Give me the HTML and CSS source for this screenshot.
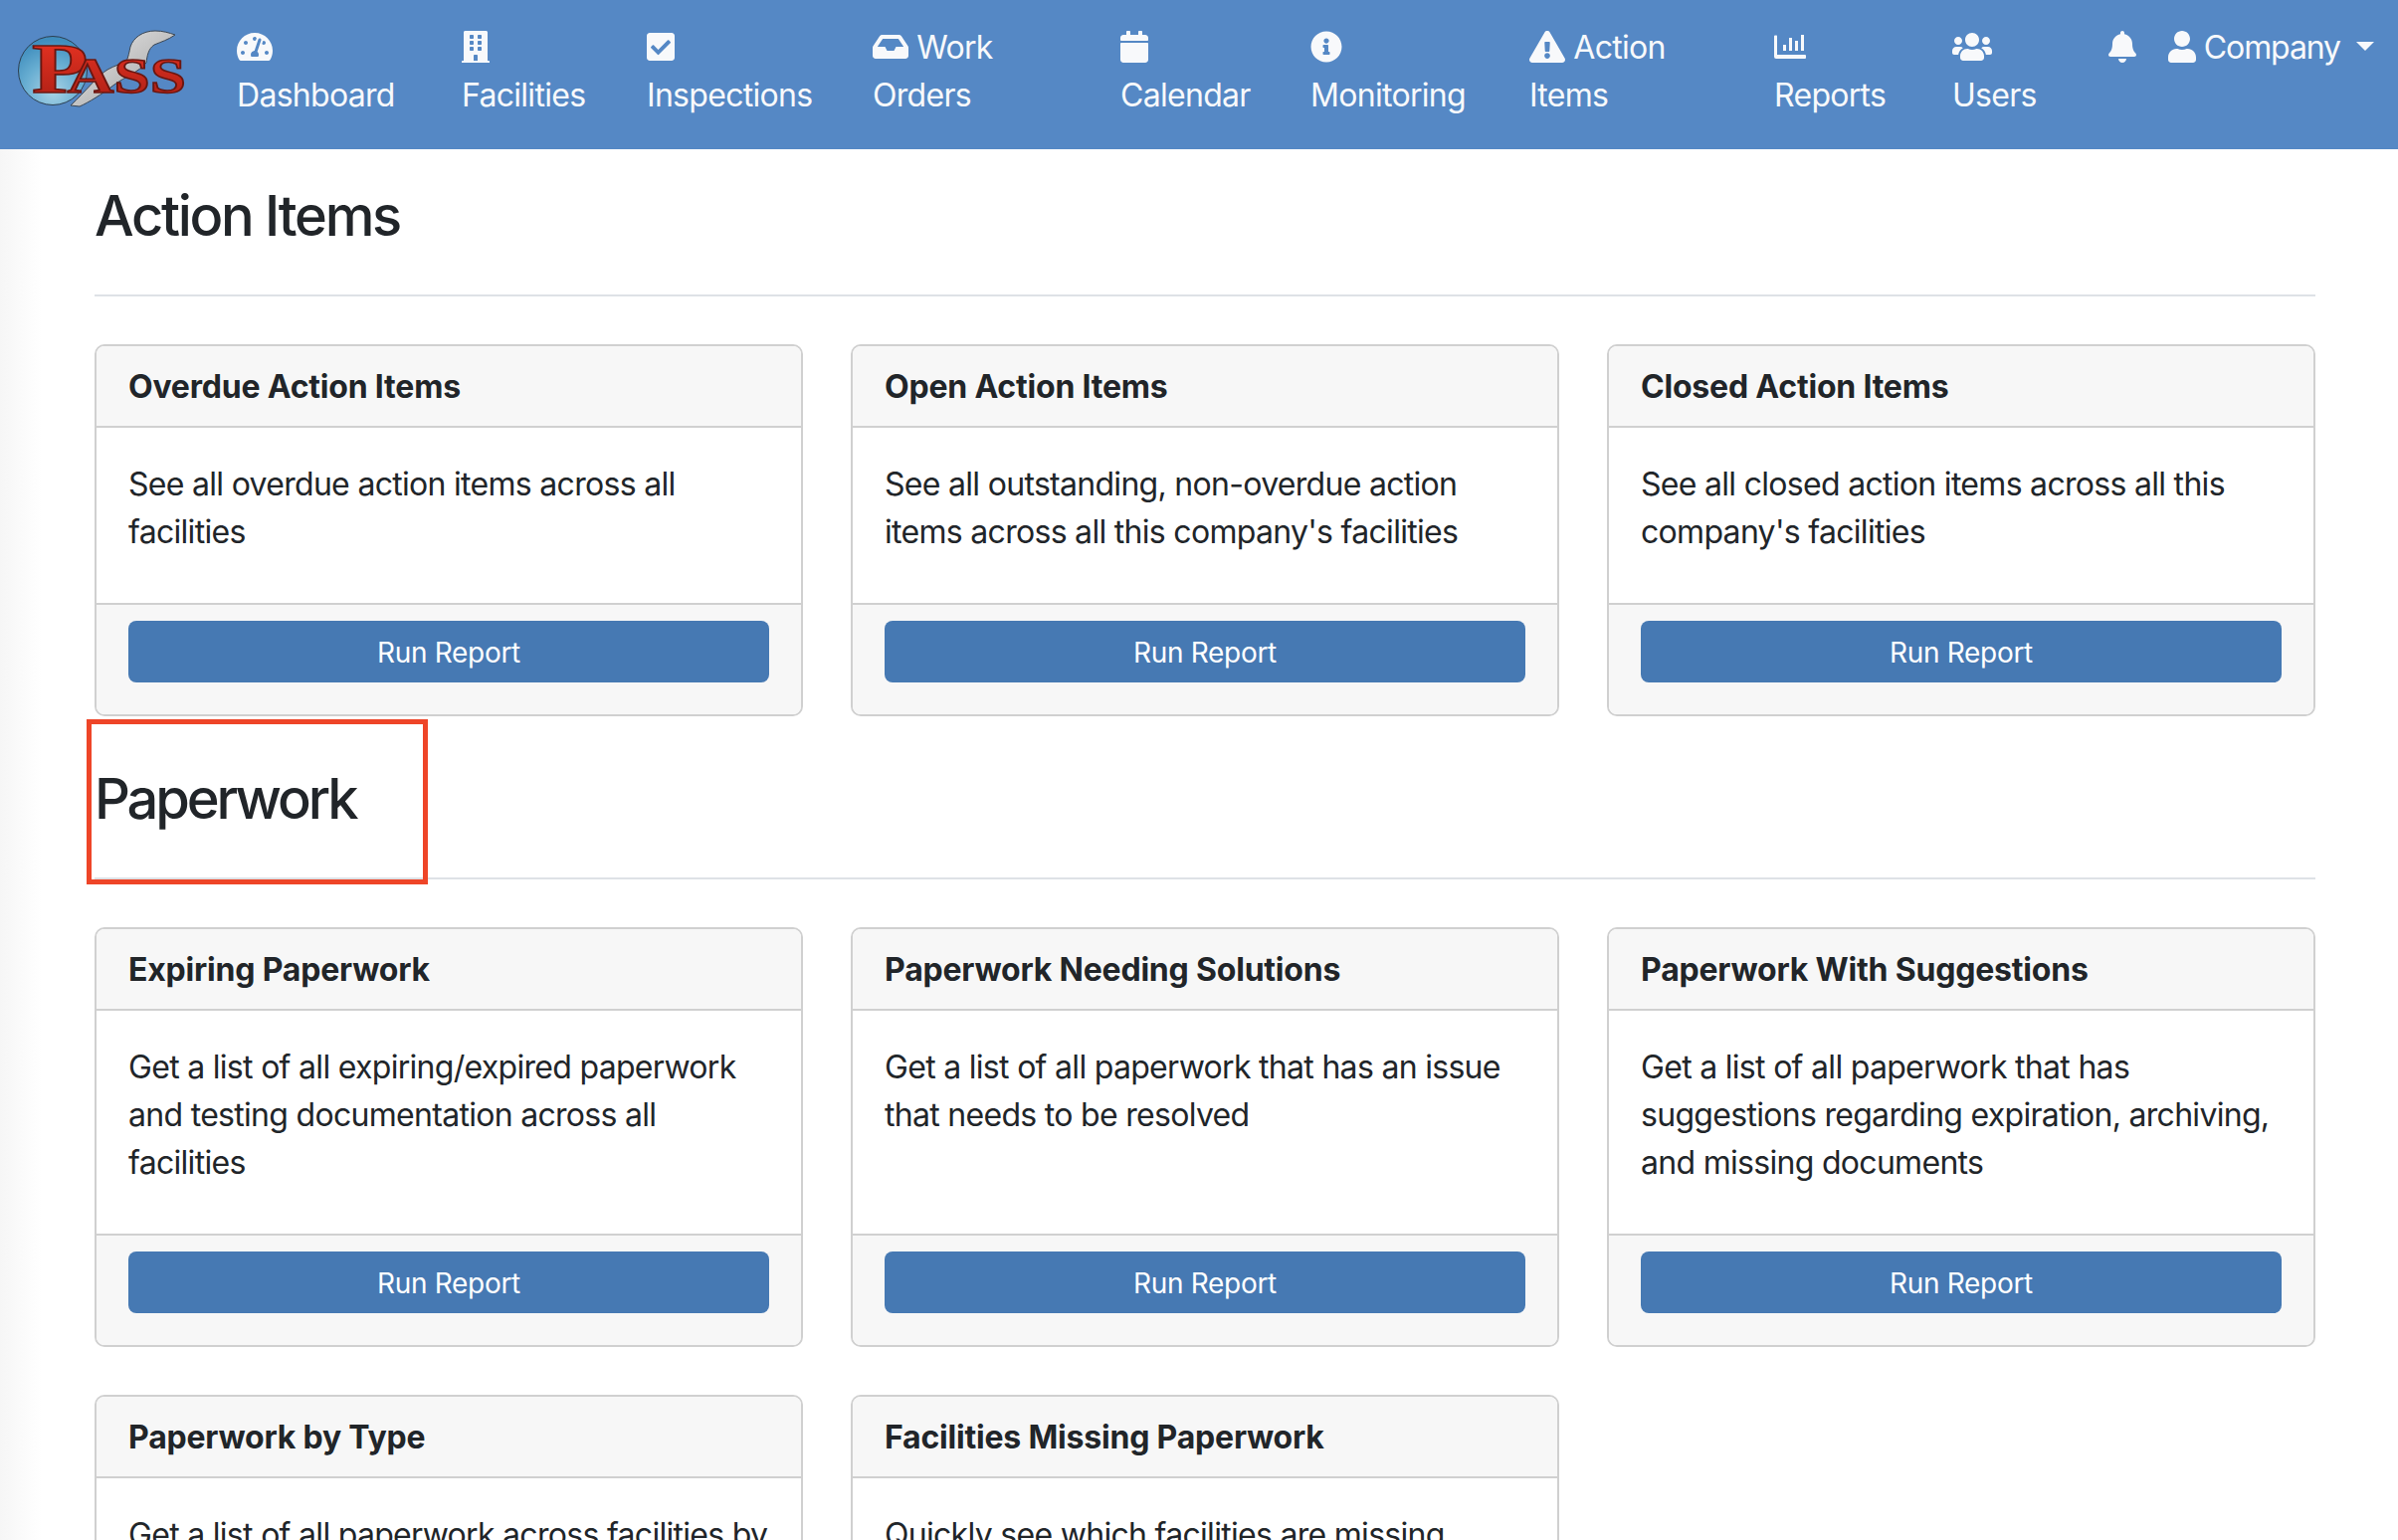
FILE: index.html
```html
<!DOCTYPE html>
<html lang="en">
<head>
<meta charset="utf-8">
<title>Action Items</title>
<link rel="stylesheet" href="styles.css">
</head>
<body>
<nav class="navbar">
  <a class="brand" href="#">
    <svg class="logo" viewBox="0 0 170 80" aria-label="PASS logo">
      <defs>
        <radialGradient id="orb" cx="50%" cy="80%" r="75%">
          <stop offset="0" stop-color="#a9d3e6"/>
          <stop offset="0.55" stop-color="#68aed2"/>
          <stop offset="1" stop-color="#3f8dbd"/>
        </radialGradient>
        <linearGradient id="steel" x1="0" y1="0" x2="1" y2="1">
          <stop offset="0" stop-color="#ebebeb"/>
          <stop offset="0.6" stop-color="#bcbcbc"/>
          <stop offset="1" stop-color="#8d8d8d"/>
        </linearGradient>
        <linearGradient id="red" x1="0" y1="0" x2="0" y2="1">
          <stop offset="0" stop-color="#ee3524"/>
          <stop offset="1" stop-color="#a81e14"/>
        </linearGradient>
      </defs>
      <circle cx="33" cy="41" r="34.5" fill="url(#orb)" stroke="#2c3f50" stroke-width="1"/>
      <path d="M136 1c-13 0-22 7-25 16-1 5-2 10-4 15-5 2-12 4-19 8-10 6-22 22-37 36l9 1c9-4 22-12 35-22 11-8 25-13 32-22 1-7 2-14 8-18 7-3 14-5 21-10-6-2-12-4-20-4z" fill="url(#steel)" stroke="#3a4654" stroke-width="1"/>
      <text class="logo-word" transform="translate(12 63) scale(1.3 1)"><tspan class="logo-p">P</tspan><tspan class="logo-ass" dx="-16">ASS</tspan></text>
    </svg>
  </a>
  <a class="nav-link item-dashboard" href="#"><svg class="icon" viewBox="0 0 576 512"><path d="M288 32C128.94 32 0 160.94 0 320c0 52.8 14.25 102.26 39.06 144.8 5.61 9.62 16.3 15.2 27.44 15.2h443c11.14 0 21.83-5.58 27.44-15.2C561.75 422.26 576 372.8 576 320c0-159.06-128.94-288-288-288zm0 64c14.71 0 26.58 10.13 30.32 23.65-1.11 2.26-2.64 4.23-3.45 6.67l-9.22 27.67c-5.13 3.49-10.97 6.01-17.64 6.01-17.67 0-32-14.33-32-32S270.33 96 288 96zM96 384c-17.67 0-32-14.33-32-32s14.33-32 32-32 32 14.33 32 32-14.33 32-32 32zm48-160c-17.67 0-32-14.33-32-32s14.33-32 32-32 32 14.33 32 32-14.33 32-32 32zm246.77-72.41l-61.33 184C343.13 347.33 352 364.54 352 384c0 11.72-3.38 22.55-8.88 32H232.88c-5.5-9.45-8.88-20.28-8.88-32 0-33.94 26.5-61.43 59.9-63.59l61.34-184.01c4.17-12.56 17.73-19.45 30.36-15.17 12.57 4.19 19.35 17.79 15.17 30.36zm14.66 57.2l15.52-46.55c3.47-1.29 7.13-2.23 11.05-2.23 17.67 0 32 14.33 32 32s-14.33 32-32 32c-11.38-.01-20.89-6.28-26.57-15.22zM480 384c-17.67 0-32-14.33-32-32s14.33-32 32-32 32 14.33 32 32-14.33 32-32 32z"/></svg> Dashboard</a>
  <a class="nav-link item-facilities" href="#"><svg class="icon" viewBox="0 0 448 512"><path d="M436 480h-20V24c0-13.255-10.745-24-24-24H56C42.745 0 32 10.745 32 24v456H12c-6.627 0-12 5.373-12 12v20h448v-20c0-6.627-5.373-12-12-12zM128 76c0-6.627 5.373-12 12-12h40c6.627 0 12 5.373 12 12v40c0 6.627-5.373 12-12 12h-40c-6.627 0-12-5.373-12-12V76zm0 96c0-6.627 5.373-12 12-12h40c6.627 0 12 5.373 12 12v40c0 6.627-5.373 12-12 12h-40c-6.627 0-12-5.373-12-12v-40zm52 148h-40c-6.627 0-12-5.373-12-12v-40c0-6.627 5.373-12 12-12h40c6.627 0 12 5.373 12 12v40c0 6.627-5.373 12-12 12zm76 160h-64v-84c0-6.627 5.373-12 12-12h40c6.627 0 12 5.373 12 12v84zm64-172c0 6.627-5.373 12-12 12h-40c-6.627 0-12-5.373-12-12v-40c0-6.627 5.373-12 12-12h40c6.627 0 12 5.373 12 12v40zm0-96c0 6.627-5.373 12-12 12h-40c-6.627 0-12-5.373-12-12v-40c0-6.627 5.373-12 12-12h40c6.627 0 12 5.373 12 12v40zm0-96c0 6.627-5.373 12-12 12h-40c-6.627 0-12-5.373-12-12V76c0-6.627 5.373-12 12-12h40c6.627 0 12 5.373 12 12v40z"/></svg> Facilities</a>
  <a class="nav-link item-inspections" href="#"><svg class="icon" viewBox="0 0 448 512"><path d="M400 480H48c-26.51 0-48-21.49-48-48V80c0-26.51 21.49-48 48-48h352c26.51 0 48 21.49 48 48v352c0 26.51-21.49 48-48 48zm-204.686-98.059l184-184c6.248-6.248 6.248-16.379 0-22.627l-22.627-22.627c-6.248-6.248-16.379-6.249-22.628 0L184 302.745l-70.059-70.059c-6.248-6.248-16.379-6.248-22.628 0l-22.627 22.627c-6.248 6.248-6.248 16.379 0 22.627l104 104c6.249 6.25 16.379 6.25 22.628.001z"/></svg> Inspections</a>
  <a class="nav-link item-work" href="#"><svg class="icon" viewBox="0 0 576 512"><path d="M567.938 243.908L462.25 85.374A48.003 48.003 0 0 0 422.311 64H153.689a48 48 0 0 0-39.938 21.374L8.062 243.908A47.994 47.994 0 0 0 0 270.533V400c0 26.51 21.49 48 48 48h480c26.51 0 48-21.49 48-48V270.533a47.994 47.994 0 0 0-8.062-26.625zM162.252 128h251.497l85.333 128H376l-32 64H232l-32-64H76.918l85.334-128z"/></svg> Work Orders</a>
  <a class="nav-link item-calendar" href="#"><svg class="icon" viewBox="0 0 448 512"><path d="M12 192h424c6.6 0 12 5.4 12 12v260c0 26.5-21.5 48-48 48H48c-26.5 0-48-21.5-48-48V204c0-6.6 5.4-12 12-12zm436-44v-36c0-26.5-21.5-48-48-48h-48V12c0-6.6-5.4-12-12-12h-40c-6.6 0-12 5.4-12 12v52H160V12c0-6.6-5.4-12-12-12h-40c-6.6 0-12 5.4-12 12v52H48C21.5 64 0 85.5 0 112v36c0 6.6 5.4 12 12 12h424c6.6 0 12-5.4 12-12z"/></svg> Calendar</a>
  <a class="nav-link item-monitoring" href="#"><svg class="icon" viewBox="0 0 512 512"><path d="M256 8C119.043 8 8 119.083 8 256c0 136.997 111.043 248 248 248s248-111.003 248-248C504 119.083 392.957 8 256 8zm0 110c23.196 0 42 18.804 42 42s-18.804 42-42 42-42-18.804-42-42 18.804-42 42-42zm56 254c0 6.627-5.373 12-12 12h-88c-6.627 0-12-5.373-12-12v-24c0-6.627 5.373-12 12-12h12v-64h-12c-6.627 0-12-5.373-12-12v-24c0-6.627 5.373-12 12-12h64c6.627 0 12 5.373 12 12v100h12c6.627 0 12 5.373 12 12v24z"/></svg> Monitoring</a>
  <a class="nav-link item-action" href="#"><svg class="icon" viewBox="0 0 576 512"><path d="M569.517 440.013C587.975 472.007 564.806 512 527.94 512H48.054c-36.937 0-59.999-40.055-41.577-71.987L246.423 23.985c18.467-32.009 64.72-31.951 83.154 0l239.94 416.028zM288 354c-25.405 0-46 20.595-46 46s20.595 46 46 46 46-20.595 46-46-20.595-46-46-46zm-43.673-165.346l7.418 136c.347 6.364 5.609 11.346 11.982 11.346h48.546c6.373 0 11.635-4.982 11.982-11.346l7.418-136c.375-6.874-5.098-12.654-11.982-12.654h-63.383c-6.884 0-12.356 5.78-11.981 12.654z"/></svg> Action Items</a>
  <a class="nav-link item-reports" href="#"><svg class="icon" viewBox="0 0 32 32"><path d="M0 5.5a1 1 0 0 1 1-1h1.4a.6.6 0 0 1 .6.6V24h28a1 1 0 0 1 1 1v2a1 1 0 0 1-1 1H2a2 2 0 0 1-2-2zM9 14h3v6H9zM15 7h3v13h-3zM21 10h3v10h-3zM27 4h3v16h-3z"/></svg> Reports</a>
  <a class="nav-link item-users" href="#"><svg class="icon" viewBox="0 0 640 512"><path d="M96 224c35.3 0 64-28.7 64-64s-28.7-64-64-64-64 28.7-64 64 28.7 64 64 64zm448 0c35.3 0 64-28.7 64-64s-28.7-64-64-64-64 28.7-64 64 28.7 64 64 64zm32 32h-64c-17.6 0-33.5 7.1-45.1 18.6 40.3 22.1 68.9 62 75.1 109.4h66c17.7 0 32-14.3 32-32v-32c0-35.3-28.7-64-64-64zm-256 0c61.9 0 112-50.1 112-112S381.9 32 320 32 208 82.1 208 144s50.1 112 112 112zm76.8 32h-8.3c-20.8 10-43.9 16-68.5 16s-47.6-6-68.5-16h-8.3C179.6 288 128 339.6 128 403.2V432c0 26.5 21.5 48 48 48h288c26.5 0 48-21.5 48-48v-28.8c0-63.6-51.6-115.2-115.2-115.2zm-223.7-13.4C161.5 263.1 145.6 256 128 256H64c-35.3 0-64 28.7-64 64v32c0 17.7 14.3 32 32 32h65.9c6.3-47.4 34.9-87.3 75.2-109.4z"/></svg> Users</a>
  <div class="nav-right">
    <a class="nav-link bell" href="#"><svg class="icon" viewBox="0 0 448 512"><path d="M224 512c35.32 0 63.97-28.65 63.97-64H160.03c0 35.35 28.65 64 63.97 64zm215.39-149.71c-19.32-20.76-55.47-51.99-55.47-154.29 0-77.7-54.48-139.9-127.94-155.16V32c0-17.67-14.32-32-31.98-32s-31.98 14.33-31.98 32v20.84C118.56 68.1 64.08 130.3 64.08 208c0 102.3-36.15 133.53-55.47 154.29-6 6.45-8.66 14.16-8.61 21.71.11 16.4 12.98 32 32.1 32h383.8c19.12 0 32-15.6 32.1-32 .05-7.55-2.61-15.27-8.61-21.71z"/></svg></a>
    <a class="nav-link company" href="#"><svg class="icon" viewBox="0 0 448 512"><path d="M224 256c70.7 0 128-57.3 128-128S294.7 0 224 0 96 57.3 96 128s57.3 128 128 128zm89.6 32h-16.7c-22.2 10.2-46.9 16-72.9 16s-50.6-5.8-72.9-16h-16.7C60.2 288 0 348.2 0 422.4V464c0 26.5 21.5 48 48 48h352c26.5 0 48-21.5 48-48v-41.6c0-74.2-60.2-134.4-134.4-134.4z"/></svg> Company</a>
  </div>
</nav>
<main class="content">
  <section class="section">
    <h1 class="page-title title-action">Action Items</h1>
    <div class="card-grid">
      <article class="card">
        <h2 class="card-header">Overdue Action Items</h2>
        <div class="card-body"><p>See all overdue action items across all facilities</p></div>
        <div class="card-footer"><a class="btn" href="#">Run Report</a></div>
      </article>
      <article class="card">
        <h2 class="card-header">Open Action Items</h2>
        <div class="card-body"><p>See all outstanding, non-overdue action items across all this company's facilities</p></div>
        <div class="card-footer"><a class="btn" href="#">Run Report</a></div>
      </article>
      <article class="card">
        <h2 class="card-header">Closed Action Items</h2>
        <div class="card-body"><p>See all closed action items across all this company's facilities</p></div>
        <div class="card-footer"><a class="btn" href="#">Run Report</a></div>
      </article>
    </div>
  </section>
  <section class="section">
    <h1 class="page-title title-paperwork">Paperwork<span class="highlight"></span></h1>
    <div class="card-grid">
      <article class="card">
        <h2 class="card-header">Expiring Paperwork</h2>
        <div class="card-body"><p>Get a list of all expiring/expired paperwork and testing documentation across all facilities</p></div>
        <div class="card-footer"><a class="btn" href="#">Run Report</a></div>
      </article>
      <article class="card">
        <h2 class="card-header">Paperwork Needing Solutions</h2>
        <div class="card-body"><p>Get a list of all paperwork that has an issue that needs to be resolved</p></div>
        <div class="card-footer"><a class="btn" href="#">Run Report</a></div>
      </article>
      <article class="card">
        <h2 class="card-header">Paperwork With Suggestions</h2>
        <div class="card-body"><p>Get a list of all paperwork that has suggestions regarding expiration, archiving, and missing documents</p></div>
        <div class="card-footer"><a class="btn" href="#">Run Report</a></div>
      </article>
      <article class="card">
        <h2 class="card-header">Paperwork by Type</h2>
        <div class="card-body"><p>Get a list of all paperwork across facilities by type</p></div>
        <div class="card-footer"><a class="btn" href="#">Run Report</a></div>
      </article>
      <article class="card">
        <h2 class="card-header">Facilities Missing Paperwork</h2>
        <div class="card-body"><p>Quickly see which facilities are missing paperwork</p></div>
        <div class="card-footer"><a class="btn" href="#">Run Report</a></div>
      </article>
    </div>
  </section>
</main>
</body>
</html>
```
FILE: styles.css
```css
* { box-sizing: border-box; }
html, body { margin: 0; height: 100%; overflow: hidden; }
body {
  font-family: Inter, "Liberation Sans", sans-serif;
  font-size: 32px;
  line-height: 48px;
  letter-spacing: -0.7px;
  color: #212529;
  background: #fff;
}
.navbar {
  display: flex;
  align-items: flex-start;
  height: 150px;
  padding: 24px 24px 0 20px;
  background: #5588c5;
}
.brand { width: 218px; flex: none; display: block; margin-top: 6px; }
.logo { display: block; width: 170px; height: 80px; overflow: visible; }
.logo-word {
  font-family: "Liberation Serif", serif;
  font-weight: 700;
  letter-spacing: 0;
  fill: url(#red);
  stroke: #6a1610;
  stroke-width: 1.5px;
}
.logo-p { font-size: 71px; }
.logo-ass { font-size: 50px; }
.nav-link {
  display: block;
  flex: none;
  padding-right: 48px;
  color: #f8f9fb;
  text-decoration: none;
}
.icon { height: 32px; width: auto; vertical-align: -4px; fill: currentColor; }
.item-dashboard { width: 226px; }
.item-facilities { width: 186px; }
.item-inspections { width: 227px; }
.item-work { width: 249px; }
.item-calendar { width: 191px; }
.item-monitoring { width: 220px; }
.item-action { width: 246px; }
.item-reports { width: 179px; }
.item-users { width: 156px; }
.nav-right { display: flex; margin-left: auto; }
.nav-right .nav-link { padding-right: 0; }
.bell { margin-right: 32px; }
.company { letter-spacing: -1.1px; }
.company::after {
  content: "";
  display: inline-block;
  margin-left: 16px;
  vertical-align: 8px;
  border-top: 9.6px solid #f8f9fb;
  border-left: 9.6px solid transparent;
  border-right: 9.6px solid transparent;
}
.content {
  padding: 34px 83px 0 95px;
  background: linear-gradient(to right, #f6f6f6, #fff 42px);
  min-height: calc(100% - 150px);
}
.section { margin-bottom: 50px; }
.page-title {
  position: relative;
  margin: 0 0 48px;
  padding-bottom: 45px;
  border-bottom: 2px solid #dee2e6;
  font-size: 56px;
  line-height: 67px;
  font-weight: 500;
}
.title-action { letter-spacing: -2.3px; }
.title-paperwork { letter-spacing: -3.1px; }
.highlight {
  position: absolute;
  left: -8px;
  top: -47px;
  width: 343px;
  height: 166px;
  border: 5px solid #ee4528;
  pointer-events: none;
}
.card-grid {
  display: grid;
  grid-template-columns: repeat(3, 1fr);
  gap: 48px;
}
.card {
  display: flex;
  flex-direction: column;
  border: 2px solid #d0d0d0;
  border-radius: 10px;
  background: #fff;
  overflow: hidden;
}
.card-header {
  margin: 0;
  padding: 17px 32px 15px;
  height: 82px;
  font-size: 32px;
  line-height: 48px;
  font-weight: 700;
  letter-spacing: -0.2px;
  background: #f7f7f7;
  border-bottom: 2px solid #d0d0d0;
}
.card-body { flex: 1; padding: 33px 32px 31px; }
.card-body p { margin: 0 0 16px; }
.card-footer {
  padding: 16px 32px 32px;
  background: #f7f7f7;
  border-top: 2px solid #d0d0d0;
}
.btn {
  display: block;
  height: 62px;
  line-height: 64px;
  border-radius: 8px;
  background: #4679b3;
  color: #fff;
  font-size: 28px;
  letter-spacing: -0.3px;
  text-align: center;
  text-decoration: none;
}
```
